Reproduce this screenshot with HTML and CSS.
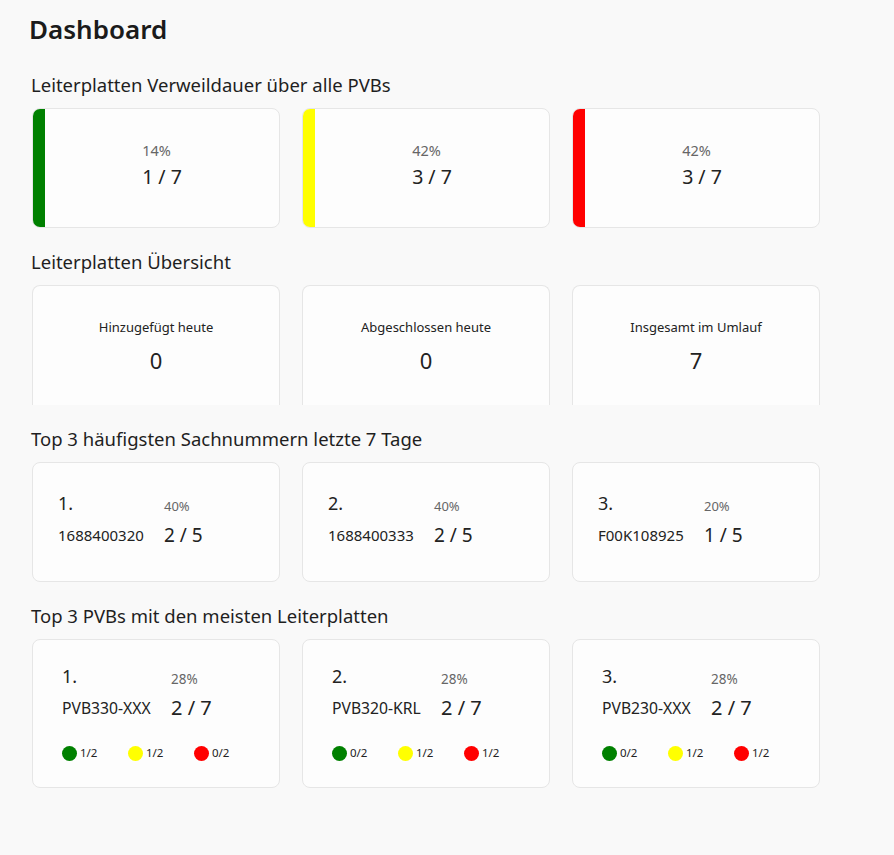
FILE: index.html
```html
<!DOCTYPE html>
<html lang="de">
<head>
<meta charset="utf-8">
<title>Dashboard</title>
<link rel="stylesheet" href="styles.css">
</head>
<body>
<main class="page">
  <h1 class="title">Dashboard</h1>

  <section class="section">
    <h2 class="section-title">Leiterplatten Verweildauer über alle PVBs</h2>
    <div class="cards">
      <div class="card dwell">
        <div class="bar bar-green"></div>
        <div class="dwell-body">
          <div class="dwell-block">
            <div class="pct">14%</div>
            <div class="ratio">1 / 7</div>
          </div>
        </div>
      </div>
      <div class="card dwell">
        <div class="bar bar-yellow"></div>
        <div class="dwell-body">
          <div class="dwell-block">
            <div class="pct">42%</div>
            <div class="ratio">3 / 7</div>
          </div>
        </div>
      </div>
      <div class="card dwell">
        <div class="bar bar-red"></div>
        <div class="dwell-body">
          <div class="dwell-block">
            <div class="pct">42%</div>
            <div class="ratio">3 / 7</div>
          </div>
        </div>
      </div>
    </div>
  </section>

  <section class="section">
    <h2 class="section-title">Leiterplatten Übersicht</h2>
    <div class="cards">
      <div class="card overview">
        <div class="ov-label">Hinzugefügt heute</div>
        <div class="ov-value">0</div>
      </div>
      <div class="card overview">
        <div class="ov-label">Abgeschlossen heute</div>
        <div class="ov-value">0</div>
      </div>
      <div class="card overview">
        <div class="ov-label">Insgesamt im Umlauf</div>
        <div class="ov-value">7</div>
      </div>
    </div>
  </section>

  <section class="section">
    <h2 class="section-title">Top 3 häufigsten Sachnummern letzte 7 Tage</h2>
    <div class="cards">
      <div class="card top parts">
        <div class="rank">1.</div><div class="tpct">40%</div>
        <div class="name">1688400320</div><div class="tratio">2 / 5</div>
      </div>
      <div class="card top parts">
        <div class="rank">2.</div><div class="tpct">40%</div>
        <div class="name">1688400333</div><div class="tratio">2 / 5</div>
      </div>
      <div class="card top parts">
        <div class="rank">3.</div><div class="tpct">20%</div>
        <div class="name">F00K108925</div><div class="tratio">1 / 5</div>
      </div>
    </div>
  </section>

  <section class="section">
    <h2 class="section-title">Top 3 PVBs mit den meisten Leiterplatten</h2>
    <div class="cards">
      <div class="card top pvb">
        <div class="rank">1.</div><div class="tpct">28%</div>
        <div class="name">PVB330-XXX</div><div class="tratio">2 / 7</div>
        <div class="dots">
          <span class="dot-item"><span class="dot dot-green"></span>1/2</span>
          <span class="dot-item"><span class="dot dot-yellow"></span>1/2</span>
          <span class="dot-item"><span class="dot dot-red"></span>0/2</span>
        </div>
      </div>
      <div class="card top pvb">
        <div class="rank">2.</div><div class="tpct">28%</div>
        <div class="name">PVB320-KRL</div><div class="tratio">2 / 7</div>
        <div class="dots">
          <span class="dot-item"><span class="dot dot-green"></span>0/2</span>
          <span class="dot-item"><span class="dot dot-yellow"></span>1/2</span>
          <span class="dot-item"><span class="dot dot-red"></span>1/2</span>
        </div>
      </div>
      <div class="card top pvb">
        <div class="rank">3.</div><div class="tpct">28%</div>
        <div class="name">PVB230-XXX</div><div class="tratio">2 / 7</div>
        <div class="dots">
          <span class="dot-item"><span class="dot dot-green"></span>0/2</span>
          <span class="dot-item"><span class="dot dot-yellow"></span>1/2</span>
          <span class="dot-item"><span class="dot dot-red"></span>1/2</span>
        </div>
      </div>
    </div>
  </section>
</main>
</body>
</html>
```

FILE: styles.css
```css
html, body {
  margin: 0;
  padding: 0;
  background: #f9f9f9;
}

body {
  font-family: "Noto Sans", "Open Sans", sans-serif;
  color: #1f1f1f;
  width: 894px;
  height: 855px;
  overflow: hidden;
}

.page {
  padding: 11px 0 0 32px;
}

.title {
  margin: 0 0 0 -3px;
  font-size: 26px;
  line-height: 36px;
  font-weight: 600;
  color: #1b1b1b;
}

.section-title {
  margin: 26px 0 11px -1px;
  font-size: 18.5px;
  line-height: 24px;
  font-weight: 400;
  color: #1f1f1f;
}

.section + .section .section-title {
  margin-top: 22px;
}

.cards {
  display: grid;
  grid-template-columns: repeat(3, 248px);
  gap: 22px;
}

.card {
  box-sizing: border-box;
  background: #fdfdfd;
  border: 1px solid #e6e6e6;
  border-radius: 8px;
  overflow: hidden;
}

/* dwell cards */
.dwell {
  height: 120px;
  display: flex;
}

.bar {
  width: 12px;
  flex: none;
}
.bar-green { background: #008000; }
.bar-yellow { background: #ffff00; }
.bar-red { background: #ff0000; }

.dwell-body {
  flex: 1;
  display: flex;
  align-items: center;
  justify-content: center;
  padding-bottom: 4px;
}

.pct {
  font-size: 14.5px;
  line-height: 18px;
  color: #666;
}

.ratio {
  margin-top: 3px;
  font-size: 19.5px;
  line-height: 29px;
  color: #222;
}

/* overview cards */
.overview {
  height: 120px;
  border-bottom: none;
  border-bottom-left-radius: 0;
  border-bottom-right-radius: 0;
  display: flex;
  flex-direction: column;
  align-items: center;
  justify-content: center;
  padding-top: 2px;
}

.ov-label {
  font-size: 13px;
  line-height: 18px;
  color: #222;
}

.ov-value {
  margin-top: 9px;
  font-size: 22px;
  line-height: 30px;
  color: #222;
}

/* top cards */
.top {
  display: grid;
  align-content: start;
}

.parts {
  height: 120px;
  grid-template-columns: 106px auto;
  padding: 28px 0 0 25px;
}

.pvb {
  height: 149px;
  grid-template-columns: 109px auto;
  padding: 24px 0 0 29px;
}

.rank {
  font-size: 18px;
  line-height: 24px;
  color: #222;
}

.tpct {
  align-self: end;
  font-size: 13px;
  line-height: 18px;
  color: #666;
}

.name {
  margin-top: 7px;
  font-size: 15px;
  line-height: 26px;
  color: #222;
}

.tratio {
  margin-top: 7px;
  font-size: 19px;
  line-height: 26px;
  color: #222;
}

.pvb .tpct { font-size: 13.5px; }
.pvb .name { font-size: 15.7px; margin-top: 7px; }
.pvb .tratio { font-size: 20px; margin-top: 7px; }

.dots {
  grid-column: 1 / -1;
  display: flex;
  margin-top: 24px;
}

.dot-item {
  width: 66px;
  display: flex;
  align-items: center;
  font-size: 11.5px;
  line-height: 16px;
  color: #222;
}

.dot {
  width: 15px;
  height: 15px;
  border-radius: 50%;
  margin-right: 3px;
  flex: none;
}
.dot-green { background: #008000; }
.dot-yellow { background: #ffff00; }
.dot-red { background: #ff0000; }
```
